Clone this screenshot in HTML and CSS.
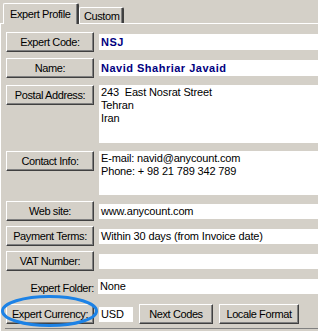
FILE: index.html
```html
<!DOCTYPE html>
<html lang="en">
<head>
    <meta charset="UTF-8">
    <title>Expert Profile</title>
    <link rel="stylesheet" href="styles.css">
</head>
<body>
    <div class="tabs">
        <div class="tab tab-active">Expert Profile</div>
        <div class="tab">Custom</div>
    </div>
    <div class="panel">
        <div class="row">
            <button class="btn">Expert Code:</button>
            <div class="field field-bold">NSJ</div>
        </div>
        <div class="row row-2">
            <button class="btn">Name:</button>
            <div class="field field-bold">Navid Shahriar Javaid</div>
        </div>
        <div class="row row-3">
            <button class="btn">Postal Address:</button>
            <div class="field field-multi field-address">243&nbsp; East Nosrat Street<br>Tehran<br>Iran</div>
        </div>
        <div class="row row-4">
            <button class="btn">Contact Info:</button>
            <div class="field field-multi field-contact">E-mail: navid@anycount.com<br>Phone: + 98 21 789 342 789</div>
        </div>
        <div class="row row-5">
            <button class="btn">Web site:</button>
            <div class="field">www.anycount.com</div>
        </div>
        <div class="row">
            <button class="btn">Payment Terms:</button>
            <div class="field">Within 30 days (from Invoice date)</div>
        </div>
        <div class="row">
            <button class="btn">VAT Number:</button>
            <div class="field"></div>
        </div>
        <div class="row">
            <div class="label">Expert Folder:</div>
            <div class="field">None</div>
        </div>
        <div class="row">
            <button class="btn">Expert Currency:</button>
            <div class="field field-short">USD</div>
            <button class="btn btn-next">Next Codes</button>
            <button class="btn btn-locale">Locale Format</button>
        </div>
        <div class="groupbox"></div>
    </div>
    <svg class="highlight" width="100" height="36" viewBox="0 0 100 36">
        <ellipse cx="49.5" cy="17" rx="47" ry="14.5" fill="none" stroke="#1c82e6" stroke-width="3"/>
    </svg>
</body>
</html>
```

FILE: styles.css
```css
body {
    margin: 0;
    width: 318px;
    height: 331px;
    overflow: hidden;
    background-color: #d4d0c8;
    font-family: "Liberation Sans", Arial, sans-serif;
    font-size: 11px;
    letter-spacing: -0.4px;
    color: #000;
    position: relative;
}

.tabs {
    display: flex;
    align-items: flex-end;
    padding: 3px 0 0 3px;
    height: 20px;
}

.tab {
    box-sizing: border-box;
    height: 16px;
    width: 45px;
    padding: 1px 0 0 4px;
    border-top: 1px solid #fff;
    border-left: 1px solid #fff;
    border-right: 2px solid #404040;
    border-top-left-radius: 2px;
    border-top-right-radius: 2px;
    box-shadow: inset -1px 0 0 #808080;
    line-height: 14px;
}

.tab-active {
    height: 21px;
    width: 76px;
    margin-bottom: -1px;
    padding: 3px 0 0 6px;
    background-color: #d4d0c8;
    position: relative;
    z-index: 1;
}

.panel {
    box-sizing: border-box;
    border-top: 1px solid #fff;
    border-left: 1px solid #fff;
    padding: 8px 0 0 5px;
    display: flex;
    flex-direction: column;
    gap: 5px;
    height: 308px;
    overflow: hidden;
}

.row {
    display: flex;
    align-items: flex-start;
    flex-shrink: 0;
    gap: 5px;
    min-height: 20px;
}

.row-2 { margin-top: 1px; }
.row-3 { margin-top: 2px; }
.row-4 { margin-top: 3px; }
.row-5 { margin-top: 1px; }

.btn {
    box-sizing: border-box;
    width: 88px;
    height: 20px;
    padding: 0;
    margin: 0;
    flex-shrink: 0;
    background-color: #d4d0c8;
    border: 1px solid;
    border-color: #fff #404040 #404040 #fff;
    box-shadow: inset -1px -1px 0 #808080;
    font-family: inherit;
    font-size: 11px;
    letter-spacing: -0.4px;
    color: #000;
    text-align: center;
}

.btn-next {
    width: 74px;
    margin-left: 1px;
}

.btn-locale {
    width: 80px;
    margin-left: 1px;
}

.field {
    box-sizing: border-box;
    flex: 1;
    height: 15px;
    margin-top: 3px;
    padding: 0 0 0 2px;
    background-color: #fff;
    line-height: 14px;
    letter-spacing: -0.15px;
    white-space: nowrap;
}

.field-bold {
    height: 16px;
    margin-top: 2px;
    font-weight: bold;
    color: #000080;
    letter-spacing: 0.5px;
    line-height: 16px;
}

.field-multi {
    margin-top: 0;
    line-height: 13px;
    padding-top: 1px;
}

.field-address {
    height: 58px;
}

.field-contact {
    height: 44px;
}

.field-short {
    flex: 0 0 34px;
}

.label {
    width: 88px;
    text-align: right;
    line-height: 21px;
    padding-top: 2px;
    margin-right: -1px;
}

.groupbox {
    flex-shrink: 0;
    margin-left: -1px;
    margin-top: -1px;
    border-top: 1px solid #808080;
    box-shadow: 0 1px 0 #fff;
    height: 10px;
}

.highlight {
    position: absolute;
    left: 0;
    top: 294px;
}
```
